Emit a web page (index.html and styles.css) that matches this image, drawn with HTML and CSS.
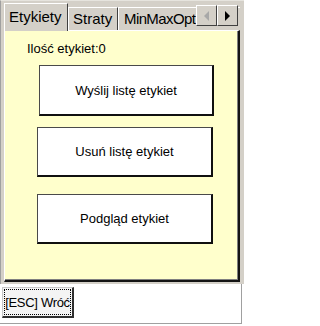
FILE: index.html
```html
<!DOCTYPE html>
<html>
<head>
<meta charset="utf-8">
<link rel="stylesheet" href="styles.css">
</head>
<body>
<div class="window">
  <div class="tabhost">
    <div class="tabstrip">
      <div class="tab active">Etykiety</div>
      <div class="tab straty">Straty</div>
      <div class="tab clip">MinMaxOpt</div>
      <div class="arrows">
        <div class="arrow"><svg width="6" height="10" viewBox="0 0 6 10"><polygon points="5,0 5,10 0,5" fill="#a8a8a8"/></svg></div>
        <div class="arrow"><svg width="6" height="10" viewBox="0 0 6 10"><polygon points="0,0 0,10 5,5" fill="#000"/></svg></div>
      </div>
    </div>
    <div class="panel">
      <div class="count">Ilość etykiet:0</div>
      <div class="btn b1">Wyślij listę etykiet</div>
      <div class="btn b2">Usuń listę etykiet</div>
      <div class="btn b3">Podgląd etykiet</div>
    </div>
  </div>
  <div class="footer">
    <div class="esc"><span class="focus">[ESC] Wróć</span></div>
  </div>
</div>
</body>
</html>
```

FILE: styles.css
```css
* { box-sizing: border-box; }
html, body { margin: 0; padding: 0; background: #ffffff; }
body { font-family: "Liberation Sans", Arial, sans-serif; color: #000; }

.window {
  width: 244px;
  height: 326px;
  display: flex;
  flex-direction: column;
  background: #ffffff;
}

.tabhost {
  height: 284px;
  background: #d4d0c8;
  border-top: 1px solid #e6e4de;
  border-left: 1px solid #a0a0a0;
  padding: 0 4px 2px 3px;
  display: flex;
  flex-direction: column;
}

.tabstrip {
  height: 29px;
  display: flex;
  align-items: flex-end;
  position: relative;
}

.tab {
  height: 23px;
  font-size: 15px;
  line-height: 21px;
  padding: 0 5px 0 6px;
  border-top: 1px solid #ffffff;
  border-left: 1px solid #ffffff;
  border-right: 1px solid #404040;
  white-space: nowrap;
  background: #d4d0c8;
}

.tab.active {
  width: 64px;
  line-height: 25px;
  padding: 0 0 0 4px;
  position: relative;
  z-index: 1;
  margin-bottom: -1px;
  height: 28px;
}

.tab.straty {
  width: 50px;
  padding-left: 4px;
}

.tab.clip {
  flex: 1;
  overflow: hidden;
  border-right: none;
  padding-left: 5px;
  letter-spacing: -0.6px;
}

.arrows {
  position: absolute;
  right: 2px;
  top: 4px;
  display: flex;
}

.arrow {
  width: 21px;
  height: 21px;
  background: #d4d0c8;
  border-top: 1px solid #ffffff;
  border-left: 1px solid #ffffff;
  border-right: 1px solid #404040;
  border-bottom: 1px solid #404040;
  display: flex;
  align-items: center;
  justify-content: center;
}

.panel {
  flex: 1;
  background: #ffffcc;
  border-top: 1px solid #ffffff;
  border-left: 1px solid #ffffff;
  border-right: 2px solid #141414;
  border-bottom: 2px solid #141414;
  box-shadow: inset -1px -1px 0 #808080;
  display: flex;
  flex-direction: column;
  align-items: flex-start;
}

.count {
  font-size: 13px;
  line-height: 15px;
  margin: 10px 0 0 22px;
}

.btn {
  background: #ffffff;
  border: 1px solid #4a4a4a;
  border-right: 2px solid #101010;
  border-bottom: 2px solid #101010;
  font-size: 13px;
  display: flex;
  align-items: center;
  justify-content: center;
  height: 50px;
  width: 176px;
  margin-left: 32px;
}

.btn.b1 { margin-top: 9px; height: 51px; width: 175px; margin-left: 34px; }
.btn.b2 { margin-top: 11px; }
.btn.b3 { margin-top: 17px; }

.footer {
  height: 40px;
  margin: 0 2px 2px 0;
  border-right: 1px solid #a0a0a0;
  border-bottom: 1px solid #a0a0a0;
  background: #ffffff;
  padding: 3px 0 0 2px;
}

.esc {
  width: 72px;
  height: 31px;
  background: #f4f4f4;
  border-top: 1px solid #c8c8c8;
  border-left: 1px solid #c8c8c8;
  border-right: 2px solid #303030;
  border-bottom: 2px solid #303030;
  padding: 1px;
}

.focus {
  display: flex;
  align-items: center;
  justify-content: center;
  height: 100%;
  border: 1px dotted #000;
  font-size: 13px;
  white-space: nowrap;
  letter-spacing: -0.3px;
}
```
